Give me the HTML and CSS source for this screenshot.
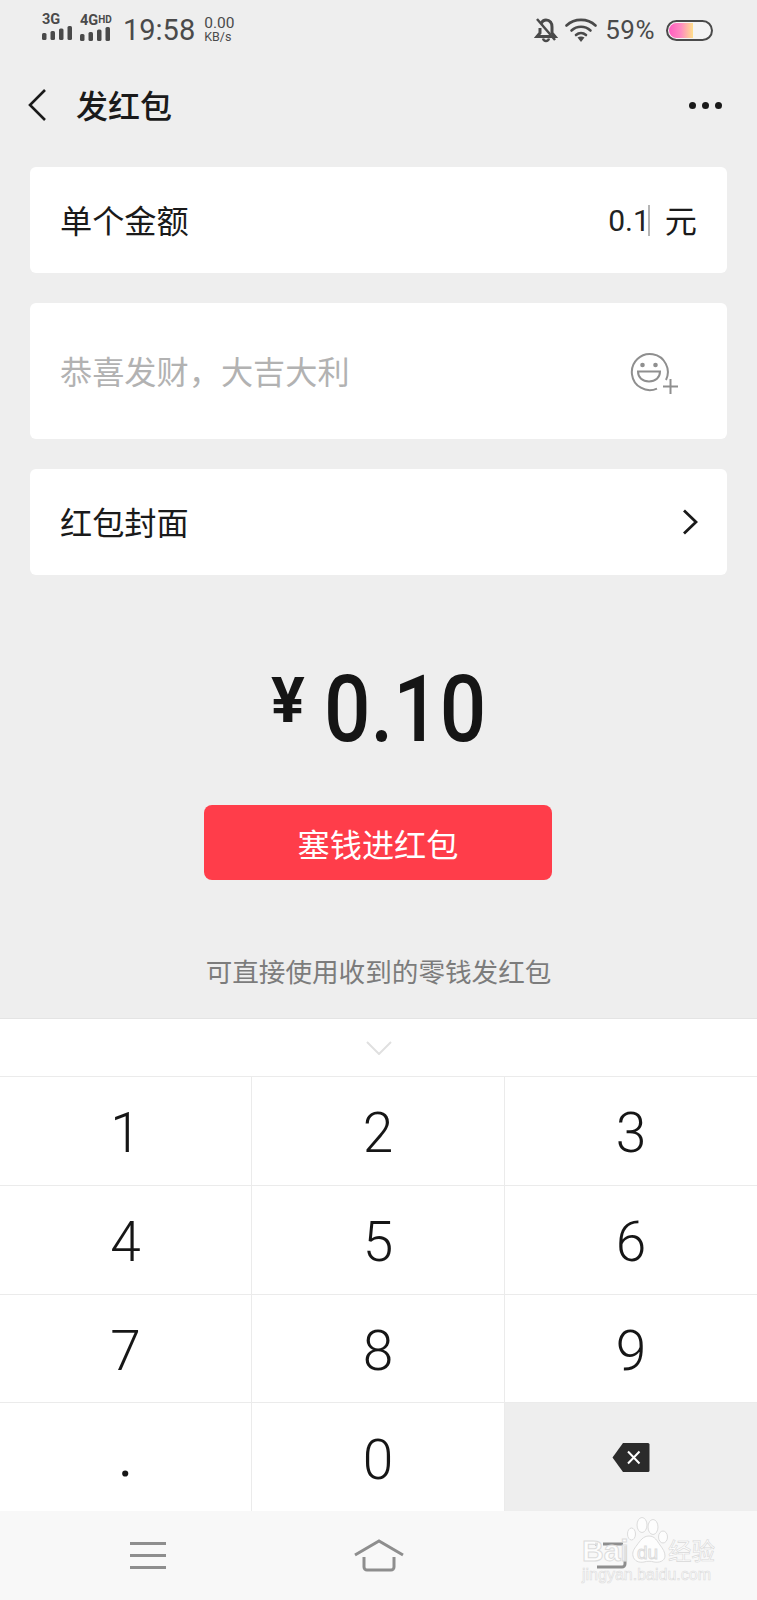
FILE: index.html
```html
<!DOCTYPE html>
<html lang="zh-CN">
<head>
    <meta charset="UTF-8">
    <meta name="viewport" content="width=device-width, initial-scale=1.0">
    <title>发红包</title>
    <link rel="stylesheet" href="styles.css">
</head>
<body>
    <div class="page">
        <!-- status bar -->
        <div class="status">
            <div class="signal">
                <span class="net">3G</span>
                <svg width="30" height="14" viewBox="0 0 30 14"><g fill="#4a4a4a"><rect x="0" y="7" width="4.500" height="7" rx="1.500"/><rect x="8.500" y="5" width="4.500" height="9" rx="1.500"/><rect x="17" y="2.500" width="4.500" height="11.500" rx="1.500"/><rect x="25.500" y="0" width="4.500" height="14" rx="1.500"/></g></svg>
            </div>
            <div class="signal second">
                <span class="net">4G<span class="hd">HD</span></span>
                <svg width="30" height="14" viewBox="0 0 30 14"><g fill="#4a4a4a"><rect x="0" y="7" width="4.500" height="7" rx="1.500"/><rect x="8.500" y="5" width="4.500" height="9" rx="1.500"/><rect x="17" y="2.500" width="4.500" height="11.500" rx="1.500"/><rect x="25.500" y="0" width="4.500" height="14" rx="1.500"/></g></svg>
            </div>
            <span class="time">19:58</span>
            <div class="speed"><span class="rate">0.00</span><span class="unit">KB/s</span></div>
            <div class="status-right">
                <svg class="bell" width="24" height="26" viewBox="0 0 24 26" fill="none" stroke="#4a4a4a" stroke-width="3"><path d="M7 6.500C8 4.500 10 3 12 3c4 0 6 3 6 7v6l3 3.500H3L6 16v-5"/><path d="M9 21.500c.5 1.800 1.500 2.500 3 2.500s2.500-.7 3-2.500" stroke-width="2.500"/><path d="M3 2l18 21" stroke-width="2.500"/></svg>
                <svg class="wifi" width="32" height="26" viewBox="0 0 32 26" fill="none" stroke="#4a4a4a" stroke-width="2.600" stroke-linecap="round"><path d="M1.500 8.500C9.500 1 22.500 1 30.500 8.500"/><path d="M6.500 13.500c5.500-5 13.500-5 19 0"/><path d="M11 18c3-2.500 7-2.500 10 0"/><path d="M12.500 20.500L16 25l3.500-4.500c-2-1.500-5-1.500-7 0z" fill="#4a4a4a" stroke="none"/></svg>
                <span class="percent">59%</span>
                <div class="battery"><div class="battery-fill"></div></div>
            </div>
        </div>

        <!-- title -->
        <div class="header">
            <svg class="back" width="20" height="34" viewBox="0 0 20 34" fill="none" stroke="#1a1a1a" stroke-width="2.600"><path d="M18 2L3 17l15 15"/></svg>
            <h1 class="title">发红包</h1>
            <div class="more"><i></i><i></i><i></i></div>
        </div>

        <div class="main">
            <div class="card row">
                <span class="label">单个金额</span>
                <div class="amount-input"><span class="num">0.1</span><span class="caret"></span><span class="yuan label">元</span></div>
            </div>
            <div class="card greeting">
                <span class="placeholder">恭喜发财，大吉大利</span>
                <svg class="emoji" width="52" height="44" viewBox="0 0 52 44" fill="none" stroke="#8f8f8f" stroke-width="2"><path d="M36 30A18 18 0 1 0 27 38.600"/><circle cx="12.500" cy="15" r="2.300" fill="#8f8f8f" stroke="none"/><circle cx="25.500" cy="15" r="2.300" fill="#8f8f8f" stroke="none"/><path d="M8 21.500h22c0 6-4.500 10-11 10s-11-4-11-10z"/><path d="M33 36.500h15M40.500 29v15"/></svg>
            </div>
            <div class="card row">
                <span class="label">红包封面</span>
                <svg class="go" width="16" height="26" viewBox="0 0 16 26" fill="none" stroke="#1a1a1a" stroke-width="2.800"><path d="M2 1.500L14 13 2 24.500"/></svg>
            </div>

            <div class="total"><span class="yen">¥</span><span class="sum">0.10</span></div>
            <button class="send" type="button">塞钱进红包</button>
            <p class="hint">可直接使用收到的零钱发红包</p>
        </div>

        <!-- number pad -->
        <div class="keyboard">
            <div class="handle">
                <svg width="26" height="14" viewBox="0 0 26 14" fill="none" stroke="#e0e0e0" stroke-width="2"><path d="M1 1l12 12L25 1"/></svg>
            </div>
            <div class="keys">
                <div class="key">1</div>
                <div class="key">2</div>
                <div class="key">3</div>
                <div class="key">4</div>
                <div class="key">5</div>
                <div class="key">6</div>
                <div class="key">7</div>
                <div class="key">8</div>
                <div class="key">9</div>
                <div class="key dot">.</div>
                <div class="key">0</div>
                <div class="key del">
                    <svg width="38" height="31" viewBox="0 0 38 31"><path d="M11 1h25a1.500 1.500 0 0 1 1.500 1.500v26a1.500 1.500 0 0 1-1.500 1.500H11L.5 15.500z" fill="#2b2b2b"/><path d="M16 9.500l11.500 12M27.500 9.500L16 21.500" stroke="#fff" stroke-width="2" fill="none"/></svg>
                </div>
            </div>
        </div>

        <!-- system nav -->
        <div class="nav">
            <svg width="36" height="28" viewBox="0 0 36 28" fill="#8e8e8e"><rect y="0" width="36" height="3"/><rect y="12" width="36" height="3"/><rect y="24" width="36" height="3"/></svg>
            <svg width="50" height="33" viewBox="0 0 50 33" fill="none" stroke="#8e8e8e" stroke-width="3"><path d="M1 16L25 2l24 14"/><path d="M10 18v10a3 3 0 0 0 3 3h24a3 3 0 0 0 3-3V18"/></svg>
            <svg width="34" height="28" viewBox="0 0 34 28" fill="none" stroke="#8e8e8e" stroke-width="3"><path d="M2 2h3M10 2h20"/><path d="M32 4v18a3 3 0 0 1-3 3H4"/></svg>
        </div>

        <!-- watermark over the corner -->
        <div class="watermark">
            <svg class="paw" width="42" height="50" viewBox="0 0 42 50" fill="#fff" fill-opacity="0.7" stroke="#dcdcdc"><ellipse cx="4.500" cy="19" rx="4" ry="6"/><ellipse cx="15" cy="10" rx="5" ry="7.500"/><ellipse cx="26" cy="12" rx="5" ry="7.500"/><ellipse cx="36" cy="22" rx="4.500" ry="6"/><path d="M22 21c-6 0-9 5-12 9-3 4-5 7-4 11 1 5 6 7 11 6 3-1 7-1 10 0 5 1 11-1 11-6 0-4-2-7-5-11-3-4-5-9-11-9z"/></svg>
            <span class="mark-bai">Bai</span>
            <span class="mark-du">du</span>
            <span class="mark-jy">经验</span>
            <span class="mark-url">jingyan.baidu.com</span>
        </div>
    </div>
</body>
</html>
```

FILE: styles.css
```css
* {
    box-sizing: border-box;
}

body {
    margin: 0;
    background-color: #eeeeee;
    font-family: "Noto Sans CJK SC", "Noto Sans", sans-serif;
    color: #1a1a1a;
}

.page {
    position: relative;
    width: 757px;
    height: 1600px;
    display: flex;
    flex-direction: column;
    overflow: hidden;
}

/* status bar */
.status {
    height: 60px;
    padding: 14px 44px 0 42px;
    display: flex;
    align-items: flex-start;
    color: #4a4a4a;
    font-family: Roboto, sans-serif;
}

.signal {
    width: 30px;
    display: flex;
    flex-direction: column;
}

.signal.second {
    margin-left: 8px;
}

.net {
    font-size: 14.500px;
    line-height: 12px;
    font-weight: 700;
    white-space: nowrap;
}

.hd {
    font-size: 10px;
    vertical-align: 2px;
}

.time {
    margin-left: 13px;
    margin-top: 1px;
    font-size: 29px;
    line-height: 30px;
}

.speed {
    margin-left: 9px;
    display: flex;
    flex-direction: column;
    padding-top: 1px;
}

.rate {
    font-size: 15.500px;
    line-height: 16px;
}

.unit {
    font-size: 12.500px;
    line-height: 12px;
}

.status-right {
    margin-left: auto;
    display: flex;
    align-items: center;
    height: 30px;
    margin-top: 1px;
}

.wifi {
    margin-left: 7px;
}

.percent {
    margin-left: 8px;
    font-size: 26px;
    letter-spacing: 0.500px;
}

.battery {
    margin-left: 11px;
    width: 47px;
    height: 21px;
    border: 2px solid #4a4a4a;
    border-radius: 11px;
    padding: 1px;
    background-color: #f4f4f4;
}

.battery-fill {
    width: 59%;
    height: 100%;
    border-radius: 8px 0 0 8px;
    background: linear-gradient(to right, #ff5cc0, #ff8cc0 50%, #ffe08c);
}

/* title */
.header {
    height: 90px;
    padding: 0 35px 0 27px;
    display: flex;
    align-items: center;
}

.title {
    margin: -3px 0 0 29px;
    font-size: 32px;
    font-weight: 500;
}

.more {
    margin-left: auto;
    display: flex;
    gap: 6px;
}

.more i {
    width: 7px;
    height: 7px;
    border-radius: 50%;
    background-color: #1a1a1a;
}

.main {
    flex: 1;
    padding: 17px 30px 0;
    display: flex;
    flex-direction: column;
    align-items: center;
}

.card {
    width: 100%;
    background-color: #fff;
    border-radius: 6px;
    margin-bottom: 30px;
    padding: 0 30px;
    display: flex;
    align-items: center;
    justify-content: space-between;
    font-size: 32.200px;
}

.row {
    height: 106px;
}

.greeting {
    height: 136px;
}

.label {
    margin-top: -3px;
}

.placeholder {
    color: #b2b2b2;
    margin-top: -2px;
}

.emoji {
    margin-right: 15px;
    margin-top: 2px;
}

.go {
    margin-right: -1px;
}

.amount-input {
    display: flex;
    align-items: center;
}

.num {
    font-family: Roboto, sans-serif;
    font-size: 30px;
    color: #222;
}

.caret {
    width: 2px;
    height: 31px;
    margin-left: -2px;
    background-color: #b5b5b5;
}

.yuan {
    margin-left: 15px;
}

.total {
    margin-top: 42px;
    height: 120px;
    display: flex;
    align-items: center;
    justify-content: center;
    font-family: Roboto, sans-serif;
    font-weight: 500;
    color: #151515;
}

.yen {
    font-size: 63px;
    margin-right: 19px;
    margin-top: -14px;
    font-weight: 700;
}

/* digits in the shot are narrower than Roboto */
.sum {
    display: inline-block;
    margin: 4px -11px 0;
    font-size: 93px;
    transform: scaleX(0.88);
}

.send {
    margin-top: 38px;
    margin-right: 1px;
    width: 348px;
    height: 75px;
    border: none;
    border-radius: 8px;
    background-color: #ff3d4a;
    color: #fff;
    font-family: inherit;
    font-size: 32.200px;
}

.hint {
    margin: 71px 0 0;
    line-height: 40px;
    font-size: 26.600px;
    color: #7c7c7c;
}

/* number pad */
.keyboard {
    height: 493px;
    background-color: #fff;
    border-top: 1px solid #e4e4e4;
}

.handle {
    height: 57px;
    display: flex;
    align-items: center;
    justify-content: center;
}

.keys {
    display: grid;
    grid-template-columns: 252px 253px 252px;
    grid-auto-rows: 108.750px;
}

.key {
    display: flex;
    align-items: center;
    justify-content: center;
    padding-top: 5px;
    border-top: 1px solid #ebebeb;
    border-right: 1px solid #ebebeb;
    font-family: Roboto, sans-serif;
    font-weight: 300;
    font-size: 55px;
    color: #161616;
}

.key:nth-child(3n) {
    border-right: none;
}

.dot {
    padding-top: 0;
    font-weight: 400;
}

.del {
    background-color: #eeeeee;
    padding-top: 0;
}

.nav {
    height: 89px;
    background-color: #f8f8f8;
    display: grid;
    grid-template-columns: 295px 168px 294px;
    justify-items: center;
    align-items: center;
}

/* the watermark sits on top of the nav bar */
.watermark {
    position: absolute;
    left: 582px;
    top: 1515px;
    width: 136px;
    height: 70px;
    font-family: "Liberation Sans", sans-serif;
    color: rgba(255, 255, 255, 0.75);
    -webkit-text-stroke: 1px #dcdcdc;
}

.paw {
    position: absolute;
    left: 45px;
    top: 0;
}

.mark-bai {
    position: absolute;
    left: 0;
    top: 21px;
    font-size: 30px;
    line-height: 30px;
    font-weight: 700;
}

.mark-du {
    position: absolute;
    left: 55px;
    top: 28px;
    font-size: 19px;
    line-height: 20px;
}

.mark-jy {
    position: absolute;
    left: 86px;
    top: 20px;
    font-family: "Noto Sans CJK SC", sans-serif;
    font-size: 23.500px;
    line-height: 30px;
    -webkit-text-stroke: 0.600px #d8d8d8;
}

.mark-url {
    position: absolute;
    left: 0;
    top: 51px;
    font-size: 16px;
    line-height: 17px;
    -webkit-text-stroke: 0.600px #dcdcdc;
    white-space: nowrap;
}
```
